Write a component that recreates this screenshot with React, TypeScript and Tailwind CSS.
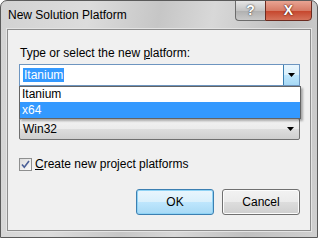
import React from "react";

const font = { fontFamily: '"Liberation Sans", Arial, sans-serif' };

const Arrow = () => (
  <svg width="7" height="4" viewBox="0 0 7 4">
    <path d="M0 0h7L3.5 4z" fill="#000" />
  </svg>
);

export default function App() {
  return (
    <div
      className="relative w-[318px] h-[238px] overflow-hidden rounded-t-[7px] border border-[#5a5a5a] bg-[linear-gradient(100deg,#d2d2d2_0%,#dcdcdc_25%,#c6c6c6_45%,#d8d8d8_60%,#c0c0c0_80%,#d0d0d0_100%)] text-[12px] text-black"
      style={font}
    >
      {/* title bar */}
      <div className="flex h-[28px] items-center pl-[7px] pb-[1px] text-[12px] text-black">
        New Solution Platform
      </div>

      {/* caption buttons */}
      <div className="absolute right-[5px] top-[-1px] flex h-[21px]">
        <div className="flex w-[30px] items-center justify-center rounded-bl-[4px] border border-[#6b6b6b] border-r-0 bg-[linear-gradient(#e6e6e6,#c4c4c4_50%,#afafaf_51%,#c9c9c9)] text-[14px] font-bold text-white [text-shadow:0_0_1px_#444,0_0_2px_#555]">
          ?
        </div>
        <div className="flex w-[47px] items-center justify-center rounded-br-[4px] border border-[#6b2b20] bg-[linear-gradient(#e8a493,#d67b66_50%,#c5442b_51%,#d5735b)] text-[14px] font-bold text-white [text-shadow:0_0_1px_#5a1c10,0_0_2px_#5a1c10]">
          X
        </div>
      </div>

      {/* client area */}
      <div className="relative ml-[6px] h-[202px] w-[304px] border border-[#8d8d8d] bg-[#f0f0f0] shadow-[0_0_0_1px_#e4e4e4]">
        <div className="flex flex-col pl-[11px] pt-[15px]">
          <div className="h-[16px] pl-[1px] leading-[16px]">
            Type or select the new <span className="underline">p</span>latform:
          </div>

          {/* editable combo */}
          <div className="mt-[3px] flex h-[22px] w-[281px] border border-[#6d95c0] bg-white">
            <div className="flex flex-1 items-center pl-[3px]">
              <span className="bg-[#3399ff] px-[1px] leading-[14px] text-white">Itanium</span>
            </div>
            <div className="flex w-[16px] items-center justify-center border-l border-[#3c7fb1] bg-[linear-gradient(#eaf6fd,#d9f0fc_50%,#bee6fd_51%,#a7d9f5)]">
              <Arrow />
            </div>
          </div>

          {/* space taken by the label hidden under the open list */}
          <div className="h-[32px]" />

          {/* drop-down combo */}
          <div className="flex h-[22px] w-[281px] items-center justify-between rounded-[2px] border border-[#707070] bg-[linear-gradient(#f2f2f2,#ebebeb_50%,#dddddd_51%,#cfcfcf)] pl-[3px] pr-[5px]">
            <span>Win32</span>
            <Arrow />
          </div>

          {/* checkbox */}
          <div className="mt-[15px] flex items-center">
            <div className="flex h-[13px] w-[13px] items-center justify-center border border-[#8e8f8f] bg-[linear-gradient(135deg,#dcdcdc,#fbfbfb)]">
              <svg width="9" height="9" viewBox="0 0 9 9">
                <path d="M1 4.5l2.3 2.8L8 1" stroke="#4a5f97" strokeWidth="1.6" fill="none" />
              </svg>
            </div>
            <span className="ml-[3px]">
              <span className="underline">C</span>reate new project platforms
            </span>
          </div>

          {/* buttons */}
          <div className="mt-[16px] flex w-[281px] justify-end gap-[8px]">
            <div className="flex h-[26px] w-[78px] items-center justify-center rounded-[3px] border border-[#3c7fb1] bg-[linear-gradient(#eaf6fd,#d9f0fc_50%,#bee6fd_51%,#a7d9f5)] shadow-[inset_0_0_0_1px_#8fd3f5]">
              OK
            </div>
            <div className="flex h-[26px] w-[78px] items-center justify-center rounded-[3px] border border-[#707070] bg-[linear-gradient(#f2f2f2,#ebebeb_50%,#dddddd_51%,#cfcfcf)] shadow-[inset_0_0_0_1px_#fcfcfc]">
              Cancel
            </div>
          </div>
        </div>

        {/* open list */}
        <div className="absolute left-[11px] top-[56px] w-[282px] border border-[#646464] bg-white shadow-[2px_2px_2px_rgba(0,0,0,0.3)]">
          <div className="h-[15px] pl-[2px] leading-[15px]">Itanium</div>
          <div className="h-[16px] bg-[#3399ff] pl-[2px] leading-[16px] text-white">x64</div>
        </div>
      </div>
    </div>
  );
}
